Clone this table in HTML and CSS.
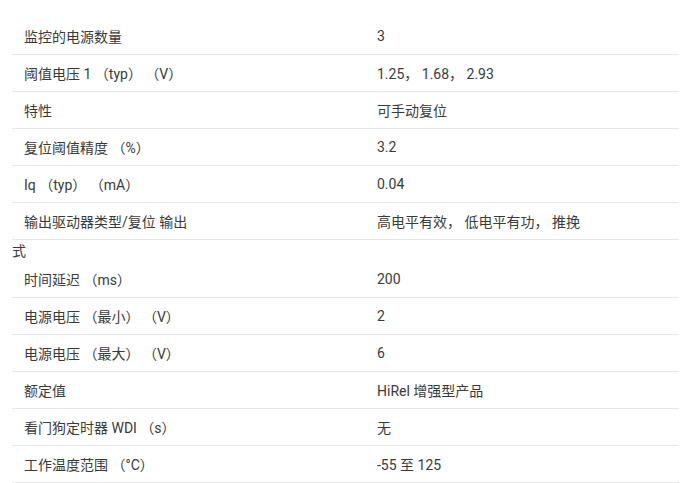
FILE: index.html
```html
<!DOCTYPE html>
<html lang="zh">
<head>
<meta charset="utf-8">
<link rel="stylesheet" href="styles.css">
</head>
<body>
<div class="spec">
  <div class="row"><div class="k">监控的电源数量</div><div class="v">3</div></div>
  <div class="row"><div class="k">阈值电压 1 （typ） （V）</div><div class="v">1.25， 1.68， 2.93</div></div>
  <div class="row"><div class="k">特性</div><div class="v">可手动复位</div></div>
  <div class="row"><div class="k">复位阈值精度 （%）</div><div class="v">3.2</div></div>
  <div class="row"><div class="k">Iq （typ） （mA）</div><div class="v">0.04</div></div>
  <div class="row"><div class="k">输出驱动器类型/复位 输出</div><div class="v">高电平有效， 低电平有功， 推挽</div></div>
  <div class="overflow">式</div>
  <div class="row"><div class="k">时间延迟 （ms）</div><div class="v">200</div></div>
  <div class="row"><div class="k">电源电压 （最小） （V）</div><div class="v">2</div></div>
  <div class="row"><div class="k">电源电压 （最大） （V）</div><div class="v">6</div></div>
  <div class="row"><div class="k">额定值</div><div class="v">HiRel 增强型产品</div></div>
  <div class="row"><div class="k">看门狗定时器 WDI （s）</div><div class="v">无</div></div>
  <div class="row"><div class="k">工作温度范围 （°C）</div><div class="v">-55 至 125</div></div>
</div>
</body>
</html>
```
FILE: styles.css
```css
html, body {
  margin: 0;
  padding: 0;
  background: #fff;
}
body {
  font-family: Roboto, "Noto Sans CJK SC", sans-serif;
  font-size: 14px;
  color: #3a3a3a;
}
.spec {
  width: 667px;
  margin: 18px 0 0 12px;
}
.row {
  display: grid;
  grid-template-columns: 353px 1fr;
  height: 36px;
  align-items: center;
  border-bottom: 1px solid #e6e6e6;
}
.k, .v {
  padding-left: 12px;
  white-space: nowrap;
}
.overflow {
  height: 20px;
  line-height: 20px;
  margin-top: 1px;
}
```
